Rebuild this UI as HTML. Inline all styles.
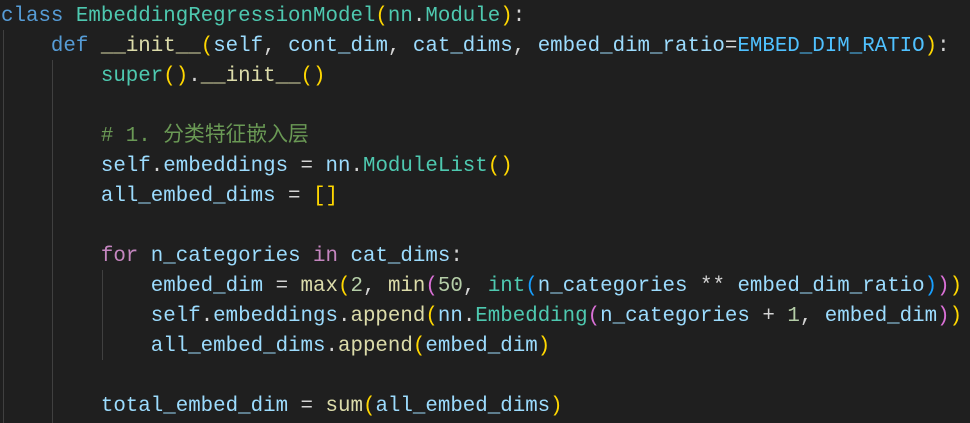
<!DOCTYPE html>
<html><head><meta charset="utf-8"><style>
html,body{margin:0;padding:0;background:#1f1f1f;width:970px;height:423px;overflow:hidden}
pre{margin:0;padding:0 0 0 1px;font-family:"Liberation Mono","Noto Sans CJK SC",monospace;font-size:20.8px;line-height:30px;color:#d4d4d4;position:relative;top:2px}
.k{color:#569cd6}.c{color:#4ec9b0}.f{color:#dcdcaa}.p{color:#9cdcfe}.g{color:#ffd700}.o{color:#da70d6}.b{color:#179fff}
.m{color:#6a9955}.n{color:#b5cea8}.C{color:#4fc1ff}.q{color:#c586c0}
.guide{position:absolute;width:1px;background:#404040}
</style></head><body>
<div class="guide" style="left:3px;top:30px;height:393px"></div>
<div class="guide" style="left:52px;top:60px;height:363px"></div>
<div class="guide" style="left:102px;top:270px;height:90px"></div>
<pre><span class="k">class</span> <span class="c">EmbeddingRegressionModel</span><span class="g">(</span><span class="c">nn</span>.<span class="c">Module</span><span class="g">)</span>:
    <span class="k">def</span> <span class="f">__init__</span><span class="g">(</span><span class="p">self</span>, <span class="p">cont_dim</span>, <span class="p">cat_dims</span>, <span class="p">embed_dim_ratio</span>=<span class="C">EMBED_DIM_RATIO</span><span class="g">)</span>:
        <span class="c">super</span><span class="g">()</span>.<span class="f">__init__</span><span class="g">()</span>

        <span class="m"># 1. 分类特征嵌入层</span>
        <span class="p">self</span>.<span class="p">embeddings</span> = <span class="p">nn</span>.<span class="c">ModuleList</span><span class="g">()</span>
        <span class="p">all_embed_dims</span> = <span class="g">[]</span>

        <span class="q">for</span> <span class="p">n_categories</span> <span class="q">in</span> <span class="p">cat_dims</span>:
            <span class="p">embed_dim</span> = <span class="f">max</span><span class="g">(</span><span class="n">2</span>, <span class="f">min</span><span class="o">(</span><span class="n">50</span>, <span class="c">int</span><span class="b">(</span><span class="p">n_categories</span> ** <span class="p">embed_dim_ratio</span><span class="b">)</span><span class="o">)</span><span class="g">)</span>
            <span class="p">self</span>.<span class="p">embeddings</span>.<span class="f">append</span><span class="g">(</span><span class="p">nn</span>.<span class="c">Embedding</span><span class="o">(</span><span class="p">n_categories</span> + <span class="n">1</span>, <span class="p">embed_dim</span><span class="o">)</span><span class="g">)</span>
            <span class="p">all_embed_dims</span>.<span class="f">append</span><span class="g">(</span><span class="p">embed_dim</span><span class="g">)</span>

        <span class="p">total_embed_dim</span> = <span class="f">sum</span><span class="g">(</span><span class="p">all_embed_dims</span><span class="g">)</span>
</pre>
</body></html>
